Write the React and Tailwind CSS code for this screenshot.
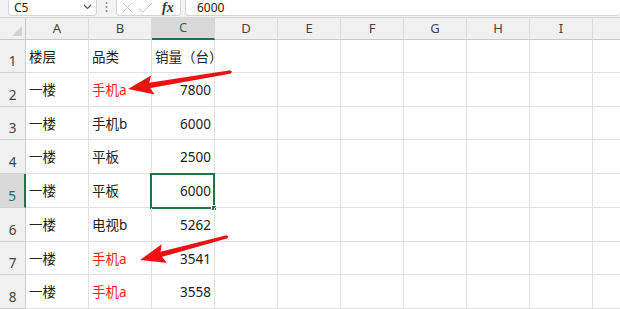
import React from 'react';

const COLS = ['A', 'B', 'C', 'D', 'E', 'F', 'G', 'H', 'I', ''];

const ROWS = [
  { h: 'h-[33px]', cells: ['楼层', '品类', '销量（台）'] },
  { h: 'h-[34px]', cells: ['一楼', '手机a', '7800'], red: true },
  { h: 'h-[33px]', cells: ['一楼', '手机b', '6000'] },
  { h: 'h-[34px]', cells: ['一楼', '平板', '2500'] },
  { h: 'h-[34px]', cells: ['一楼', '平板', '6000'], selected: true },
  { h: 'h-[34px]', cells: ['一楼', '电视b', '5262'] },
  { h: 'h-[33px]', cells: ['一楼', '手机a', '3541'], red: true },
  { h: 'h-[34px]', cells: ['一楼', '手机a', '3558'], red: true },
];

const FormulaBar = () => (
  <div className="flex h-[17px] items-start bg-[#f3f3f3] text-[12px] text-[#222]">
    <div className="ml-[8px] flex h-[16px] w-[89px] items-center justify-between rounded-b-[4px] border border-t-0 border-[#d4d4d4] bg-white pl-[5px] pr-[4px]">
      <span className="leading-none">C5</span>
      <svg width="9" height="6" viewBox="0 0 9 6" className="mb-[1px]">
        <path d="M1 1 L4.5 4.5 L8 1" fill="none" stroke="#555" strokeWidth="1.2" />
      </svg>
    </div>
    <div className="flex w-[19px] justify-center pt-[1px]">
      <svg width="3" height="12" viewBox="0 0 3 12">
        <circle cx="1.5" cy="2" r="1" fill="#888" />
        <circle cx="1.5" cy="6" r="1" fill="#888" />
        <circle cx="1.5" cy="10" r="1" fill="#888" />
      </svg>
    </div>
    <div className="flex h-[16px] w-[65px] items-center gap-[5px] rounded-b-[4px] border border-t-0 border-[#d4d4d4] bg-white pl-[5px]">
      <svg width="11" height="11" viewBox="0 0 11 11">
        <path d="M1 1 L10 10 M10 1 L1 10" stroke="#c4c4c4" strokeWidth="1" fill="none" />
      </svg>
      <svg width="15" height="11" viewBox="0 0 15 11">
        <path d="M1 6 L5 10 L14 1" stroke="#c4c4c4" strokeWidth="1" fill="none" />
      </svg>
      <span className="ml-[4px] font-['Liberation_Serif',serif] text-[14px] font-bold italic leading-none text-[#333]">fx</span>
    </div>
    <div className="ml-[4px] flex h-[16px] flex-1 items-center rounded-b-[4px] border border-t-0 border-r-0 border-[#d4d4d4] bg-white pl-[11px]">
      <span className="leading-none">6000</span>
    </div>
  </div>
);

const Arrow = ({ x, y, angle, len }) => (
  <g transform={`translate(${x} ${y}) rotate(${angle})`}>
    <polygon
      points={`0,0 25,-9.5 22,-2.6 ${len},-1.6 ${len + 1.4},0 ${len},1.6 22,2.6 25,9.5`}
      fill="#ee1111"
    />
    <polygon points={`1,0.4 24,8.8 22,2.1 ${len},1.2 ${len},1.6 22,2.6 25,9.5`} fill="#b80000" opacity="0.5" />
  </g>
);

export default function App() {
  return (
    <div className="relative h-[309px] w-[620px] overflow-hidden bg-white font-['Noto_Sans','Noto_Sans_CJK_SC',sans-serif]">
      <FormulaBar />

      {/* column headers */}
      <div className="flex h-[23px] border-t border-[#d6d6d6] bg-[#f0f0f0] text-[13px] text-[#444]">
        <div className="relative w-[26px] shrink-0 border-r border-b border-[#c8c8c8]">
          <svg width="10" height="10" viewBox="0 0 10 10" className="absolute right-[3px] bottom-[3px]">
            <polygon points="10,0 10,10 0,10" fill="#d2d2d2" />
          </svg>
        </div>
        {COLS.map((c, j) => (
          <div
            key={j}
            className={
              c === 'C'
                ? 'flex w-[63px] shrink-0 items-center justify-center border-r border-b-2 border-r-[#d6d6d6] border-b-[#217346] bg-[#d9d9d9] text-[#217346]'
                : 'flex w-[63px] shrink-0 items-center justify-center border-r border-b border-r-[#dcdcdc] border-b-[#c8c8c8]'
            }
          >
            {c}
          </div>
        ))}
      </div>

      {/* rows */}
      {ROWS.map((row, i) => (
        <div key={i} className={`flex ${row.h} text-[13.5px] text-[#222]`}>
          <div
            className={
              row.selected
                ? 'flex w-[26px] shrink-0 items-end justify-center border-r-2 border-b border-r-[#217346] border-b-[#d0d0d0] bg-[#d9d9d9] pb-[1px] text-[#217346]'
                : 'flex w-[26px] shrink-0 items-end justify-center border-r border-b border-[#d0d0d0] bg-[#f0f0f0] pb-[1px] text-[#444]'
            }
          >
            {i + 1}
          </div>
          {COLS.map((c, j) => {
            const v = row.cells[j];
            const numeric = j === 2 && i > 0;
            return (
              <div
                key={j}
                className={`relative flex w-[63px] shrink-0 items-center whitespace-nowrap border-r border-b border-[#e1e1e1] px-[3px] pt-[2px] ${numeric ? 'justify-end' : ''} ${j === 1 && row.red ? 'text-[#ff2020]' : ''}`}
              >
                {v}
                {row.selected && j === 2 && (
                  <div className="absolute -top-[1px] -left-[2px] h-[36px] w-[65px] border-2 border-[#217346]">
                    <div className="absolute -right-[4px] -bottom-[4px] h-[6px] w-[6px] border border-white bg-[#217346]" />
                  </div>
                )}
              </div>
            );
          })}
        </div>
      ))}

      {/* annotation arrows */}
      <svg className="pointer-events-none absolute top-0 left-0" width="620" height="309">
        <Arrow x={128} y={89} angle={-9.46} len={104} />
        <Arrow x={140} y={260} angle={-14.97} len={90} />
      </svg>
    </div>
  );
}
